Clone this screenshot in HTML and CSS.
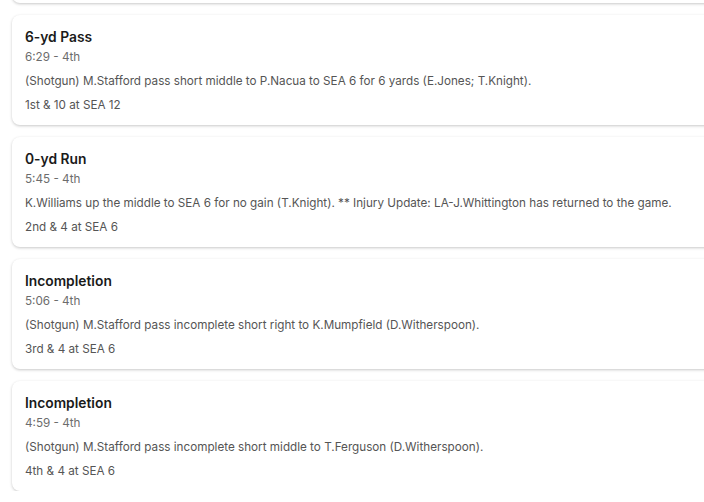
FILE: index.html
```html
<!DOCTYPE html>
<html>
<head>
<meta charset="utf-8">
<link rel="stylesheet" href="styles.css">
</head>
<body>
<div class="plays">
  <div class="play stub"></div>
  <div class="play">
    <div class="title">6-yd Pass</div>
    <div class="time">6:29 - 4th</div>
    <div class="desc">(Shotgun) M.Stafford pass short middle to P.Nacua to SEA 6 for 6 yards (E.Jones; T.Knight).</div>
    <div class="down">1st &amp; 10 at SEA 12</div>
  </div>
  <div class="play">
    <div class="title">0-yd Run</div>
    <div class="time">5:45 - 4th</div>
    <div class="desc">K.Williams up the middle to SEA 6 for no gain (T.Knight). ** Injury Update: LA-J.Whittington has returned to the game.</div>
    <div class="down">2nd &amp; 4 at SEA 6</div>
  </div>
  <div class="play">
    <div class="title">Incompletion</div>
    <div class="time">5:06 - 4th</div>
    <div class="desc">(Shotgun) M.Stafford pass incomplete short right to K.Mumpfield (D.Witherspoon).</div>
    <div class="down">3rd &amp; 4 at SEA 6</div>
  </div>
  <div class="play">
    <div class="title">Incompletion</div>
    <div class="time">4:59 - 4th</div>
    <div class="desc">(Shotgun) M.Stafford pass incomplete short middle to T.Ferguson (D.Witherspoon).</div>
    <div class="down">4th &amp; 4 at SEA 6</div>
  </div>
</div>
</body>
</html>
```
FILE: styles.css
```css
html, body {
  margin: 0;
  padding: 0;
  background: #ffffff;
  overflow: hidden;
}
body {
  font-family: Inter, Roboto, "Liberation Sans", sans-serif;
}
.plays {
  display: flex;
  flex-direction: column;
  gap: 12px;
  margin-top: -107px;
  padding-left: 12px;
  width: 730px;
}
.play {
  background: #fff;
  border-radius: 8px;
  box-shadow: 0 1px 3px rgba(0, 0, 0, 0.22);
  padding: 13px 13px 12px;
  height: 85px;
  box-sizing: content-box;
}
.title {
  font-size: 13.8px;
  line-height: 18px;
  font-weight: 600;
  color: #1a1a1a;
}
.time {
  font-size: 11.7px;
  line-height: 18px;
  color: #6c6c6c;
  margin-top: 2px;
}
.desc {
  font-size: 11.7px;
  line-height: 18px;
  color: #555555;
  margin-top: 6px;
  white-space: nowrap;
}
.down {
  font-size: 11.7px;
  line-height: 18px;
  color: #555555;
  margin-top: 6px;
}
```
